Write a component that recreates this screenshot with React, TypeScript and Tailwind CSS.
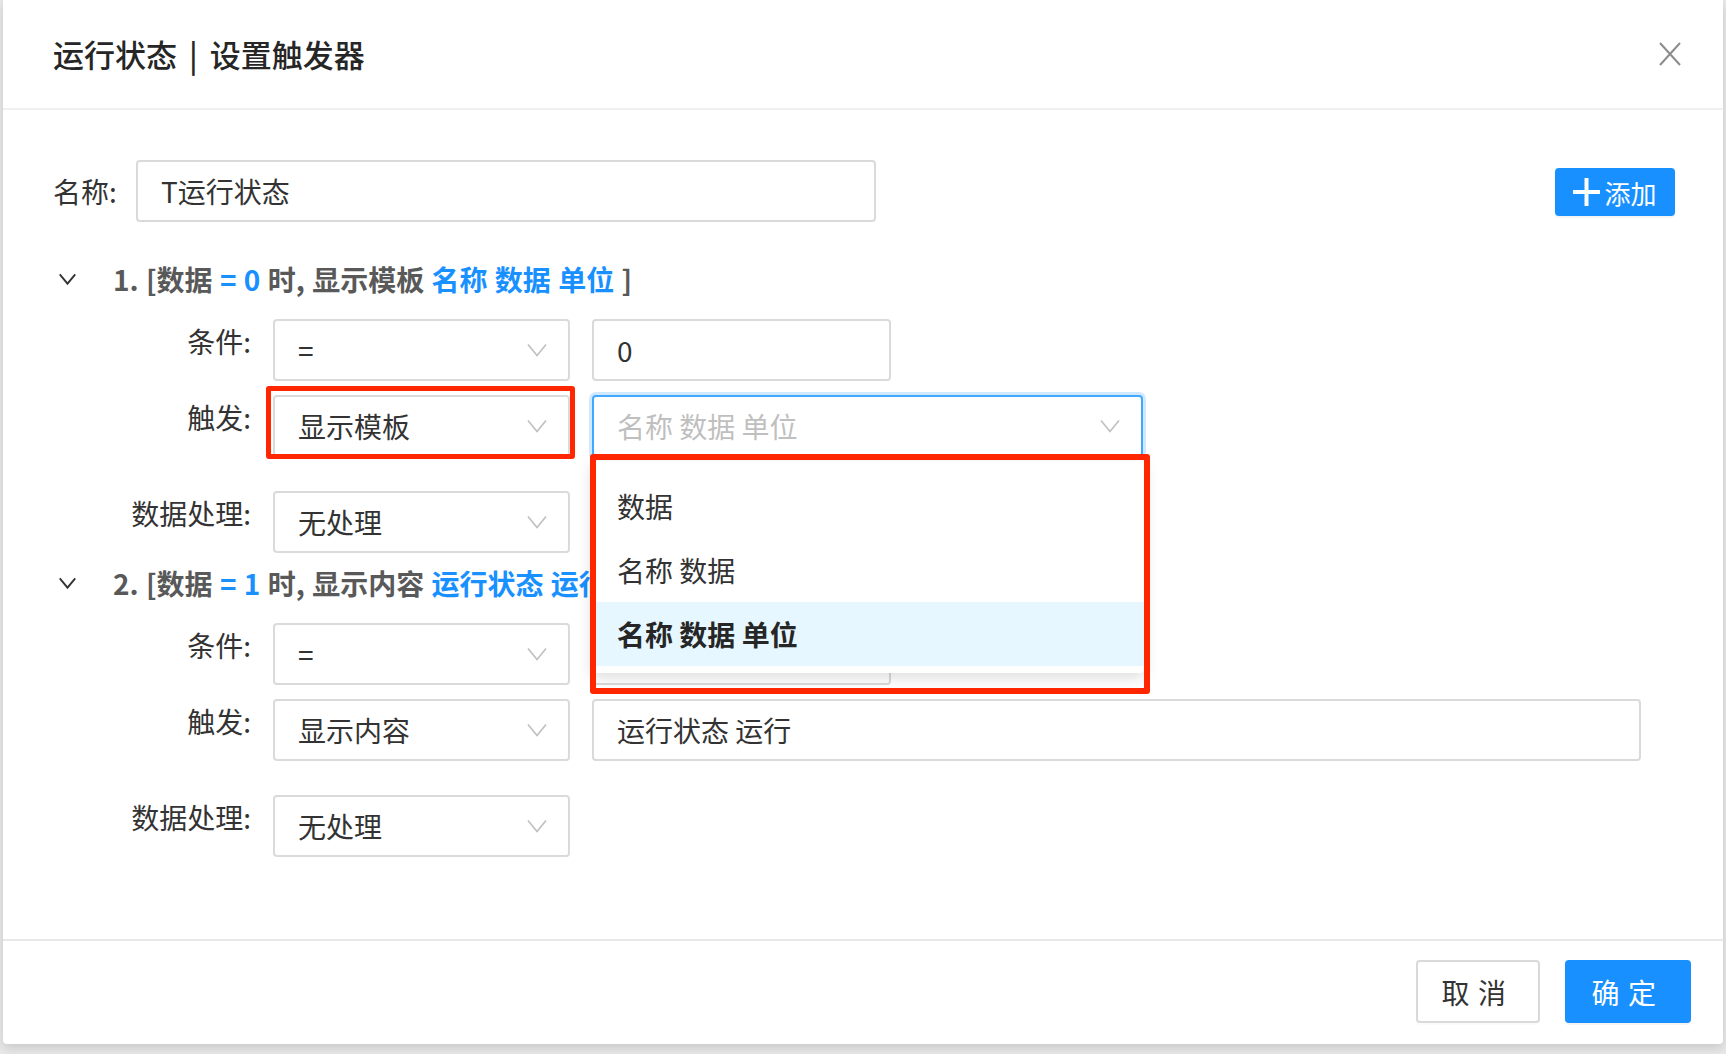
import React from "react";

function Chevron({ className, width = 1.6 }: { className?: string; width?: number }) {
  return (
    <svg viewBox="0 0 20 14" className={className} fill="none" stroke="currentColor" strokeWidth={width}>
      <path d="M1 1.5 L10 12.5 L19 1.5" />
    </svg>
  );
}

function Select({
  value,
  placeholder,
  className = "w-[297px]",
  focused = false,
}: {
  value?: string;
  placeholder?: string;
  className?: string;
  focused?: boolean;
}) {
  return (
    <div
      className={`flex h-[62px] items-center justify-between rounded-[4px] border-2 bg-white pl-[23px] pr-[21px] ${
        focused ? "border-[#40a9ff] shadow-[0_0_0_3px_rgba(24,144,255,0.2)]" : "border-[#dadada]"
      } ${className}`}
    >
      <span className={value ? "text-[#333]" : "text-[#bfbfbf]"}>{value ?? placeholder}</span>
      <Chevron className="h-[14px] w-[20px] text-[#bfbfbf]" />
    </div>
  );
}

function Input({ value, className = "w-[299px]" }: { value: string; className?: string }) {
  return (
    <div className={`flex h-[62px] items-center rounded-[4px] border-2 border-[#dadada] bg-white pl-[23px] text-[#333] ${className}`}>
      {value}
    </div>
  );
}

function FormRow({ label, children, className = "" }: { label: string; children: React.ReactNode; className?: string }) {
  return (
    <div className={`flex items-start ${className}`}>
      <div className="h-[44px] w-[198px] text-right leading-[44px] text-[#333]">{label}</div>
      <div className="ml-[22px] flex gap-[22px]">{children}</div>
    </div>
  );
}

function RuleHeader({ children }: { children: React.ReactNode }) {
  return (
    <div className="flex h-[40px] items-center">
      <Chevron className="ml-[4px] h-[12px] w-[21px] text-[#333]" width={2.2} />
      <div className="ml-[35px] whitespace-nowrap font-bold text-[#595959] [word-spacing:1px]">{children}</div>
    </div>
  );
}

const options = ["数据", "名称 数据", "名称 数据 单位"];

export default function App() {
  return (
    <div className="h-[1054px] w-full overflow-hidden bg-[#e9e9e9] px-[3px] font-['Noto_Sans_CJK_SC','Noto_Sans',sans-serif] text-[28px]">
      <div className="flex h-[1044px] w-[1720px] flex-col rounded-b-[4px] bg-white shadow-[0_4px_12px_rgba(0,0,0,0.15)]">
        {/* Header */}
        <div className="flex h-[110px] shrink-0 items-center justify-between border-b-2 border-[#f0f0f0] pl-[50px] pr-[42px]">
          <div className="flex items-center text-[31px] font-medium text-[#262626]">
            <span>运行状态</span>
            <span className="mx-[12px]">|</span>
            <span>设置触发器</span>
          </div>
          <svg viewBox="0 0 22 24" className="h-[24px] w-[22px] text-[#8c8c8c]" fill="none" stroke="currentColor" strokeWidth={2}>
            <path d="M1 1 L21 23 M21 1 L1 23" />
          </svg>
        </div>

        {/* Body */}
        <div className="flex-1 pl-[50px] pr-[48px]">
          <div className="mt-[50px] flex items-center justify-between">
            <div className="flex items-center">
              <div className="w-[83px] text-[#333]">名称:</div>
              <Input value="T运行状态" className="h-[61px] w-[740px]" />
            </div>
            <button className="mt-[2px] flex h-[48px] w-[120px] items-center justify-center gap-[4px] rounded-[4px] bg-[#1890ff] text-[26px] text-white shadow-[0_2px_0_rgba(0,0,0,0.045)]">
              <svg viewBox="0 0 27 28" className="h-[28px] w-[27px]" fill="none" stroke="currentColor" strokeWidth={4}>
                <path d="M13.5 0 V28 M0 14 H27" />
              </svg>
              <span>添加</span>
            </button>
          </div>

          {/* Rule 1 */}
          <div className="mt-[37px]">
            <RuleHeader>
              1. [数据 <span className="text-[#1890ff]">= 0</span> 时, 显示模板{" "}
              <span className="text-[#1890ff]">名称 数据 单位</span> ]
            </RuleHeader>
            <FormRow label="条件:" className="mt-[20px]">
              <Select value="=" />
              <Input value="0" />
            </FormRow>
            <FormRow label="触发:" className="mt-[14px]">
              <div className="relative">
                <Select value="显示模板" />
                <div className="pointer-events-none absolute left-[-7px] top-[-9px] h-[73px] w-[309px] rounded-[3px] border-[5px] border-[#ff2600]" />
              </div>
              <div className="relative">
                <Select focused placeholder="名称 数据 单位" className="w-[551px]" />
                <div className="absolute left-0 top-[66px] z-10 w-[552px] rounded-[4px] bg-white pb-[7px] pt-[13px] shadow-[0_4px_16px_rgba(0,0,0,0.15)]">
                  {options.map((o, i) => (
                    <div
                      key={o}
                      className={`flex h-[64px] items-center pl-[25px] text-[#333] ${
                        i === 2 ? "bg-[#e6f7ff] font-semibold text-[#262626]" : ""
                      }`}
                    >
                      {o}
                    </div>
                  ))}
                </div>
                <div className="pointer-events-none absolute left-[-2px] top-[59px] z-20 h-[240px] w-[560px] rounded-[3px] border-[6px] border-[#ff2600]" />
              </div>
            </FormRow>
            <FormRow label="数据处理:" className="mt-[34px]">
              <Select value="无处理" />
            </FormRow>
          </div>

          {/* Rule 2 */}
          <div className="mt-[10px]">
            <RuleHeader>
              2. [数据 <span className="text-[#1890ff]">= 1</span> 时, 显示内容{" "}
              <span className="text-[#1890ff]">运行状态 运行</span> ]
            </RuleHeader>
            <FormRow label="条件:" className="mt-[20px]">
              <Select value="=" />
              <Input value="1" />
            </FormRow>
            <FormRow label="触发:" className="mt-[14px]">
              <Select value="显示内容" />
              <Input value="运行状态 运行" className="w-[1049px]" />
            </FormRow>
            <FormRow label="数据处理:" className="mt-[34px]">
              <Select value="无处理" />
            </FormRow>
          </div>
        </div>

        {/* Footer */}
        <div className="flex h-[105px] shrink-0 items-start justify-end gap-[25px] border-t-2 border-[#e8e8e8] pr-[32px] pt-[19px]">
          <button className="h-[63px] w-[124px] rounded-[4px] border-2 border-[#d9d9d9] bg-white tracking-[0.3em] text-[#333] shadow-[0_2px_0_rgba(0,0,0,0.015)]">
            取消
          </button>
          <button className="h-[63px] w-[126px] rounded-[4px] bg-[#1890ff] tracking-[0.3em] text-white shadow-[0_2px_0_rgba(0,0,0,0.045)]">
            确定
          </button>
        </div>
      </div>
    </div>
  );
}
